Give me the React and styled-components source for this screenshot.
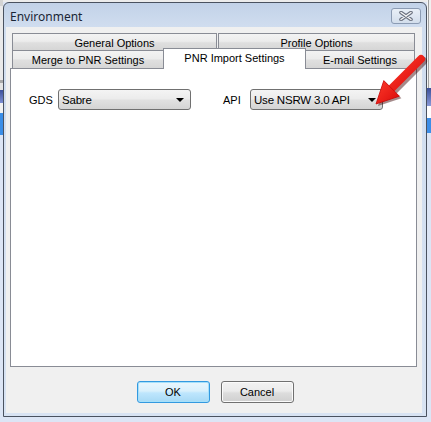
import React from 'react';
import styled, { createGlobalStyle } from 'styled-components';

const Global = createGlobalStyle`
  html, body { margin: 0; padding: 0; }
  body {
    background: #dce5f5;
    font-family: "Liberation Sans", Arial, sans-serif;
    font-size: 11px;
    color: #000;
  }
`;

const Page = styled.div`
  position: relative;
  width: 431px;
  height: 422px;
  overflow: hidden;
  display: flex;
  align-items: flex-start;
  background: linear-gradient(#ececec 0, #ececec 2px, #dce5f5 2px);
`;

const Strip = styled.div`
  width: ${(p) => p.$w}px;
  height: 422px;
  display: flex;
  flex-direction: column;
  flex: none;
`;

const Band = styled.div`
  height: ${(p) => (p.$h ? `${p.$h}px` : 'auto')};
  flex: ${(p) => (p.$h ? 'none' : '1')};
  background: ${(p) => p.$bg};
`;

const Window = styled.div`
  margin-top: 2px;
  width: 424px;
  height: 415px;
  box-sizing: border-box;
  flex: none;
  border: 1px solid #4a5260;
  border-radius: 6px 6px 0 0;
  background: linear-gradient(#c2d2e8 0, #d0ddef 24px, #d8e3f3 100%);
  display: flex;
  flex-direction: column;
  padding: 0 4px 3px 2px;
`;

const TitleBar = styled.div`
  height: 24px;
  flex: none;
  display: flex;
  justify-content: space-between;
  align-items: center;
  padding-left: 4px;
`;

const Title = styled.span`
  font-family: "Noto Sans", "Liberation Sans", sans-serif;
  font-size: 12px;
  color: #1b2636;
  margin-top: 2px;
`;

const CloseButton = styled.div`
  align-self: flex-start;
  margin-top: 5px;
  margin-right: 1px;
  width: 30px;
  height: 16px;
  box-sizing: border-box;
  border: 1px solid #8b9bb3;
  border-radius: 3px;
  background: linear-gradient(#e9eff7, #d3deec);
  display: flex;
  align-items: center;
  justify-content: center;
`;

const Body = styled.div`
  flex: 1;
  background: #f0f0f0;
  display: flex;
  flex-direction: column;
  padding: 6px 5px 10px 4px;
  min-height: 0;
`;

const TabRows = styled.div`
  display: flex;
  flex-direction: column;
  padding: 0 2px;
`;

const TabRow = styled.div`
  display: flex;
`;

const Tab = styled.div`
  box-sizing: border-box;
  width: ${(p) => p.$w}px;
  height: ${(p) => (p.$active ? 21 : p.$h)}px;
  margin-left: ${(p) => p.$ml || 0}px;
  margin-right: ${(p) => p.$mr || 0}px;
  margin-top: ${(p) => (p.$active ? -2 : 0)}px;
  margin-bottom: ${(p) => (p.$active ? -1 : 0)}px;
  border: 1px solid #898c95;
  border-bottom: none;
  background: ${(p) =>
    p.$active ? '#ffffff' : 'linear-gradient(#f3f3f3 0%, #ececec 45%, #dfdfdf 55%, #d6d6d6 100%)'};
  position: relative;
  z-index: ${(p) => (p.$active ? 2 : 1)};
  display: flex;
  align-items: center;
  justify-content: center;
  padding-top: ${(p) => (p.$active ? 0 : 1)}px;
  padding-bottom: ${(p) => (p.$active ? 3 : 0)}px;
  white-space: nowrap;
`;

const Panel = styled.div`
  flex: 1;
  border: 1px solid #898c95;
  background: #ffffff;
  padding: 20px 0 0 18px;
`;

const Fields = styled.div`
  display: flex;
  gap: 32px;
`;

const Field = styled.div`
  display: flex;
  align-items: center;
`;

const Label = styled.span`
  width: ${(p) => p.$w}px;
  flex: none;
`;

const Select = styled.div`
  box-sizing: border-box;
  width: 133px;
  height: 21px;
  border: 1px solid #707070;
  border-radius: 3px;
  background: linear-gradient(#f4f4f4 0%, #ececec 45%, #e0e0e0 55%, #d4d4d4 100%);
  display: flex;
  align-items: center;
  justify-content: space-between;
  padding: 0 6px 0 3px;
  font-size: 11.5px;
  letter-spacing: -0.2px;
`;

const Caret = styled.span`
  width: 0;
  height: 0;
  border-left: 4px solid transparent;
  border-right: 4px solid transparent;
  border-top: 4px solid #000;
`;

const ButtonRow = styled.div`
  display: flex;
  justify-content: center;
  gap: 11px;
  padding: 14px 0 0 3px;
`;

const Button = styled.button`
  width: 73px;
  height: 22px;
  box-sizing: border-box;
  border-radius: 3px;
  font-family: "Liberation Sans", Arial, sans-serif;
  font-size: 11px;
  color: #000;
  padding: 0;
  border: 1px solid ${(p) => (p.$default ? '#3399e0' : '#707070')};
  box-shadow: ${(p) => (p.$default ? 'inset 0 0 0 1px #a6e0fa' : 'inset 0 0 0 1px #fbfbfb')};
  background: ${(p) =>
    p.$default
      ? 'linear-gradient(#eaf6fd 0%, #d9f0fc 45%, #bee6fd 55%, #a7d9f5 100%)'
      : 'linear-gradient(#f2f2f2 0%, #ebebeb 45%, #dddddd 55%, #cfcfcf 100%)'};
`;

const ArrowOverlay = styled.svg`
  position: absolute;
  left: 368px;
  top: 48px;
  width: 62px;
  height: 62px;
  z-index: 5;
  pointer-events: none;
`;

export default function App() {
  return (
    <>
      <Global />
      <Page>
        <Strip $w={3}>
          <Band $h={6} $bg="#d4d4d4" />
          <Band $h={74} $bg="#e9e9ea" />
          <Band $h={3} $bg="#a8a8a8" />
          <Band $h={7} $bg="#e4e4e4" />
          <Band $h={13} $bg="linear-gradient(#3b4f9c, #7d8fd4)" />
          <Band $h={10} $bg="#f2f2f2" />
          <Band $h={22} $bg="#3a8ee8" />
          <Band $bg="#dce5f5" />
        </Strip>
        <Window>
          <TitleBar>
            <Title>Environment</Title>
            <CloseButton>
              <svg width="14" height="10" viewBox="0 0 14 10">
                <path d="M2 1.5 L12 8.5 M12 1.5 L2 8.5" stroke="#6b7280" strokeWidth="3.6" strokeLinecap="round" />
                <path d="M2 1.5 L12 8.5 M12 1.5 L2 8.5" stroke="#f7f7f7" strokeWidth="1.4" strokeLinecap="round" />
              </svg>
            </CloseButton>
          </TitleBar>
          <Body>
            <TabRows>
              <TabRow>
                <Tab $w={205} $h={17} $mr={1}>General Options</Tab>
                <Tab $w={197} $h={17}>Profile Options</Tab>
              </TabRow>
              <TabRow>
                <Tab $w={152} $h={18}>Merge to PNR Settings</Tab>
                <Tab $w={143} $ml={-1} $active>PNR Import Settings</Tab>
                <Tab $w={110} $h={18} $ml={-1}>E-mail Settings</Tab>
              </TabRow>
            </TabRows>
            <Panel>
              <Fields>
                <Field>
                  <Label $w={29}>GDS</Label>
                  <Select>
                    <span>Sabre</span>
                    <Caret />
                  </Select>
                </Field>
                <Field>
                  <Label $w={27}>API</Label>
                  <Select>
                    <span>Use NSRW 3.0 API</span>
                    <Caret />
                  </Select>
                </Field>
              </Fields>
            </Panel>
            <ButtonRow>
              <Button $default>OK</Button>
              <Button>Cancel</Button>
            </ButtonRow>
          </Body>
        </Window>
        <Strip $w={4}>
          <Band $h={88} $bg="linear-gradient(90deg, #f4f4f4 0, #f4f4f4 1px, #a0a0a0 1px, #a0a0a0 2px, #f0f0f0 2px)" />
          <Band $h={18} $bg="linear-gradient(#3a4f9a, #8a9ad8)" />
          <Band $h={12} $bg="#ffffff" />
          <Band $h={15} $bg="#3c8ee8" />
          <Band $bg="#dce5f5" />
        </Strip>
        <ArrowOverlay viewBox="0 0 62 62">
          <defs>
            <linearGradient id="arrowRed" x1="0" y1="0" x2="1" y2="1">
              <stop offset="0" stopColor="#ff3a2a" />
              <stop offset="1" stopColor="#d80a0a" />
            </linearGradient>
          </defs>
          <g transform="translate(2,2)" opacity="0.45">
            <path d="M53 11 L22 42" stroke="#3a0000" strokeWidth="8.5" strokeLinecap="round" />
            <path d="M8 56 L15.8 32.6 L31.4 48.2 Z" fill="#3a0000" />
          </g>
          <path d="M53 11 L22 42" stroke="url(#arrowRed)" strokeWidth="8" strokeLinecap="round" />
          <path d="M8 56 L15.8 32.6 L31.4 48.2 Z" fill="url(#arrowRed)" stroke="#c80808" strokeWidth="0.8" strokeLinejoin="round" />
        </ArrowOverlay>
      </Page>
    </>
  );
}
